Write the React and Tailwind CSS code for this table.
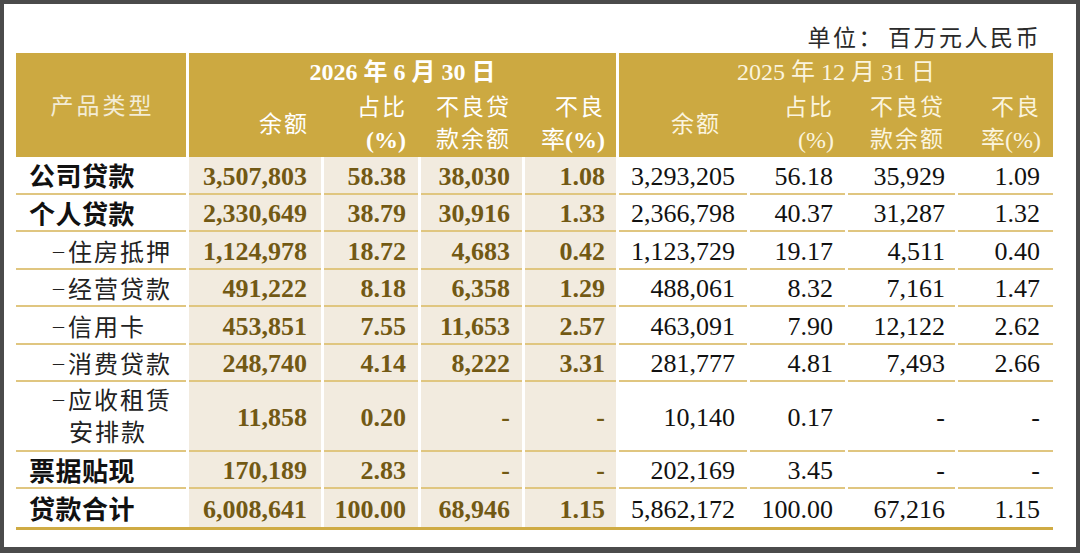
import React from "react";

const rows = [
  { label: "公司贷款", kind: "bold", v: ["3,507,803", "58.38", "38,030", "1.08", "3,293,205", "56.18", "35,929", "1.09"] },
  { label: "个人贷款", kind: "bold", v: ["2,330,649", "38.79", "30,916", "1.33", "2,366,798", "40.37", "31,287", "1.32"] },
  { label: "住房抵押", kind: "sub", v: ["1,124,978", "18.72", "4,683", "0.42", "1,123,729", "19.17", "4,511", "0.40"] },
  { label: "经营贷款", kind: "sub", v: ["491,222", "8.18", "6,358", "1.29", "488,061", "8.32", "7,161", "1.47"] },
  { label: "信用卡", kind: "sub", v: ["453,851", "7.55", "11,653", "2.57", "463,091", "7.90", "12,122", "2.62"] },
  { label: "消费贷款", kind: "sub", v: ["248,740", "4.14", "8,222", "3.31", "281,777", "4.81", "7,493", "2.66"] },
  { label: "应收租赁", label2: "安排款", kind: "sub2", v: ["11,858", "0.20", "-", "-", "10,140", "0.17", "-", "-"] },
  { label: "票据贴现", kind: "bold", v: ["170,189", "2.83", "-", "-", "202,169", "3.45", "-", "-"] },
  { label: "贷款合计", kind: "bold", last: true, v: ["6,008,641", "100.00", "68,946", "1.15", "5,862,172", "100.00", "67,216", "1.15"] },
];

const PR = ["pr-[14px]", "pr-[12px]", "pr-[12px]", "pr-[11px]", "pr-[12px]", "pr-[12px]", "pr-[10px]", "pr-[13px]"];

function Dash() {
  return (
    <span className="w-[15px] font-['Liberation_Serif',serif] text-[22px] leading-none relative -top-[2px]">–</span>
  );
}

function Label({ r }) {
  if (r.kind === "bold") {
    return <span className="pl-[13px] pt-[6px] text-[26px] font-bold leading-none text-[#111] tracking-[0.5px]">{r.label}</span>;
  }
  if (r.kind === "sub") {
    return (
      <span className="flex items-center pl-[37px] pt-[5px] text-[24px] leading-none text-[#222]">
        <Dash />
        <span className="tracking-[2px]">{r.label}</span>
      </span>
    );
  }
  return (
    <span className="flex flex-col pl-[37px] pt-[2px] text-[24px] text-[#222]">
      <span className="flex items-center h-[32px]">
        <Dash />
        <span className="tracking-[2px] leading-none">{r.label}</span>
      </span>
      <span className="flex items-center h-[32px] pl-[16px]">
        <span className="tracking-[2px] leading-none">{r.label2}</span>
      </span>
    </span>
  );
}

export default function App() {
  return (
    <div className="w-[1080px] h-[553px] bg-[#4b4b4b] pt-[4px] pl-[4px] pr-[4px] pb-[6px] font-['Liberation_Serif','Noto_Sans_CJK_SC',serif]">
      <div className="h-full w-full bg-white pl-[12px]">
        {/* unit */}
        <div className="h-[49px] w-[1037px] flex items-end justify-end pr-[12px]">
          <span className="text-[23px] leading-[28px] tracking-[2.5px] text-[#2a2a2a]">
            单位：<span className="pl-[4px]">百万元人民币</span>
          </span>
        </div>

        {/* header */}
        <div className="flex gap-x-[3px] h-[104px]">
          <div className="w-[170px] bg-[#cca941] flex items-center justify-center pt-[5px]">
            <span className="text-[23px] tracking-[3px] text-[#f3ecd6] pl-[3px]">产品类型</span>
          </div>
          <div className="w-[427px] bg-[#cca941] flex flex-col">
            <div className="h-[38px] flex items-center justify-center text-[24px] font-bold text-white">
              2026 年 6 月 30 日
            </div>
            <div className="grid grid-cols-[132px_94px_101px_91px] gap-x-[3px] h-[66px] items-center text-white text-[23px] leading-[32px]">
              <div className="text-right pr-[12px] tracking-[2px] pt-[2px]">余额</div>
              <div className="text-right pr-[11px] flex flex-col items-end">
                <span className="tracking-[2px]">占比</span>
                <span className="font-bold text-[24px] pr-[1px]">(%)</span>
              </div>
              <div className="text-right pr-[11px] flex flex-col items-end tracking-[2px]">
                <span>不良贷</span>
                <span>款余额</span>
              </div>
              <div className="text-right pr-[11px] flex flex-col items-end">
                <span className="tracking-[2px]">不良</span>
                <span className="text-[24px]">率<span className="font-bold">(%)</span></span>
              </div>
            </div>
          </div>
          <div className="w-[434px] bg-[#cca941] flex flex-col">
            <div className="h-[38px] flex items-center justify-center text-[24px] text-[#fbf4de]">
              2025 年 12 月 31 日
            </div>
            <div className="grid grid-cols-[128px_95px_107px_95px] gap-x-[3px] h-[66px] items-center text-[#fbf4de] text-[23px] leading-[32px]">
              <div className="text-right pr-[26px] tracking-[2px] pt-[2px]">余额</div>
              <div className="text-right pr-[11px] flex flex-col items-end">
                <span className="tracking-[2px]">占比</span>
                <span className="text-[24px]">(%)</span>
              </div>
              <div className="text-right pr-[10px] flex flex-col items-end tracking-[2px]">
                <span>不良贷</span>
                <span>款余额</span>
              </div>
              <div className="text-right pr-[12px] flex flex-col items-end">
                <span className="tracking-[2px]">不良</span>
                <span className="text-[24px]">率(%)</span>
              </div>
            </div>
          </div>
        </div>

        {/* body: one grid with fixed row tracks */}
        <div className="w-[1037px] grid grid-cols-[170px_132px_94px_101px_91px_128px_95px_107px_95px] grid-rows-[38px_37px_38px_37px_38px_37px_70px_37px_38px] gap-x-[3px] border-b-[3px] border-[#cfab44]">
          {rows.map((r, i) => {
            const line = r.last ? "" : "border-b-2 border-[#e0c680]";
            return (
              <React.Fragment key={i}>
                <div className={`flex items-center bg-white min-h-0 ${line}`}>
                  <Label r={r} />
                </div>
                {r.v.map((val, j) => {
                  const p1 = j < 4;
                  return (
                    <div
                      key={j}
                      className={`flex items-center justify-end min-h-0 ${PR[j]} pt-[3px] text-[26px] leading-none ${line} ${
                        p1 ? "bg-[#f2ebdf] font-bold text-[#725914]" : "bg-white text-[#111]"
                      }`}
                    >
                      {val}
                    </div>
                  );
                })}
              </React.Fragment>
            );
          })}
        </div>
      </div>
    </div>
  );
}
